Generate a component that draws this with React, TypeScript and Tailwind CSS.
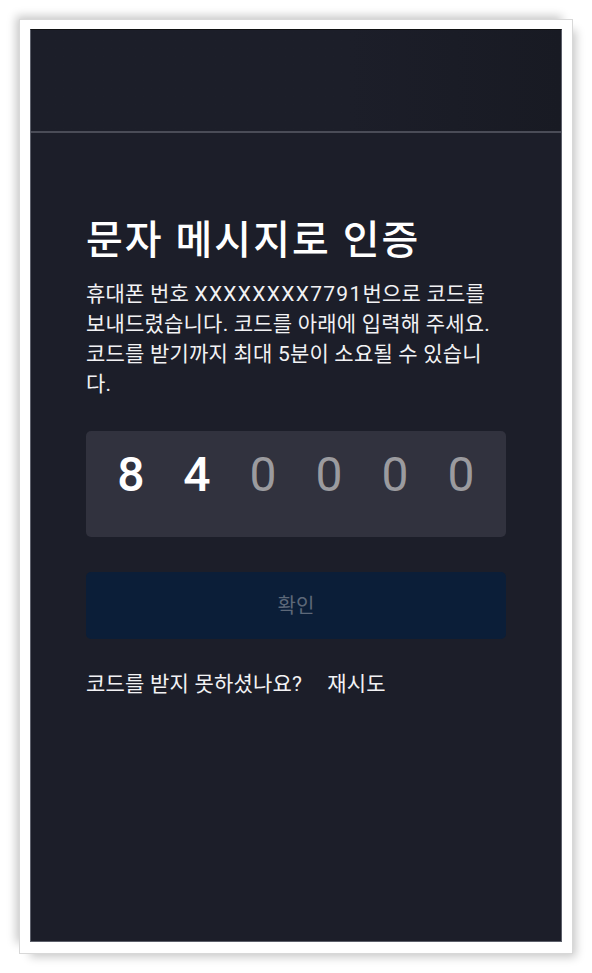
import React, { useState } from 'react';

const FONT = { fontFamily: 'Roboto, "Noto Sans CJK KR", "Noto Sans", sans-serif' };

const VerifyScreen = () => {
    const [code] = useState(['8', '4', '', '', '', '']);

    return (
        <div className="flex h-[913px] w-[532px] flex-col border-x border-b border-t border-x-[#5c5f6a] border-b-[#5c5f6a] border-t-[#121314] bg-[#1c1e29]" style={FONT}>
            <div className="h-[101px] bg-gradient-to-l from-[#181a23] to-[#1c1e29] to-40%" />
            <div className="h-[2px] bg-[#4a4c57]" />

            <div className="flex flex-col px-[55px] pt-[84px]">
                <h1 className="text-[40px] font-medium leading-[48px] tracking-[2px] text-white">문자 메시지로 인증</h1>
                <p className="mt-[14px] text-[21px] leading-[30px] tracking-[0.2px] text-[#f2f2f4]">
                    <span className="block">
                        휴대폰 번호 <span className="tracking-[1.3px]">XXXXXXXX7791</span>번으로 코드를
                    </span>
                    <span className="block">보내드렸습니다. 코드를 아래에 입력해 주세요.</span>
                    <span className="block">코드를 받기까지 최대 5분이 소요될 수 있습니</span>
                    <span className="block">다.</span>
                </p>

                <div className="mt-[32px] grid h-[106px] grid-cols-6 rounded-[5px] bg-[#31323e] px-3 pt-[14px]">
                    {code.map((digit, i) => (
                        <span
                            key={i}
                            className={`text-center text-[48px] leading-[60px] ${digit ? 'font-medium text-white' : 'text-[#9b9b9f]'}`}
                        >
                            {digit || '0'}
                        </span>
                    ))}
                </div>

                <button className="mt-[35px] flex h-[67px] items-center justify-center rounded-[5px] bg-[#0b1e38] text-[20px] text-[#5d6878]">
                    확인
                </button>

                <div className="mt-[30px] flex gap-[25px] text-[21px] leading-[30px] tracking-[0.2px] text-[#f2f2f4]">
                    <span>코드를 받지 못하셨나요?</span>
                    <span>재시도</span>
                </div>
            </div>
        </div>
    );
};

export default function App() {
    return (
        <div className="h-[973px] w-[592px] bg-white pl-[19px] pt-[19px]">
            <div className="h-[935px] w-[554px] border border-[#d8d8d8] bg-white pb-[11px] pl-[10px] pr-[10px] pt-[9px] shadow-[-7px_-7px_9px_-4px_rgba(0,0,0,0.22),7px_7px_9px_-4px_rgba(0,0,0,0.22)]">
                <VerifyScreen />
            </div>
        </div>
    );
}
